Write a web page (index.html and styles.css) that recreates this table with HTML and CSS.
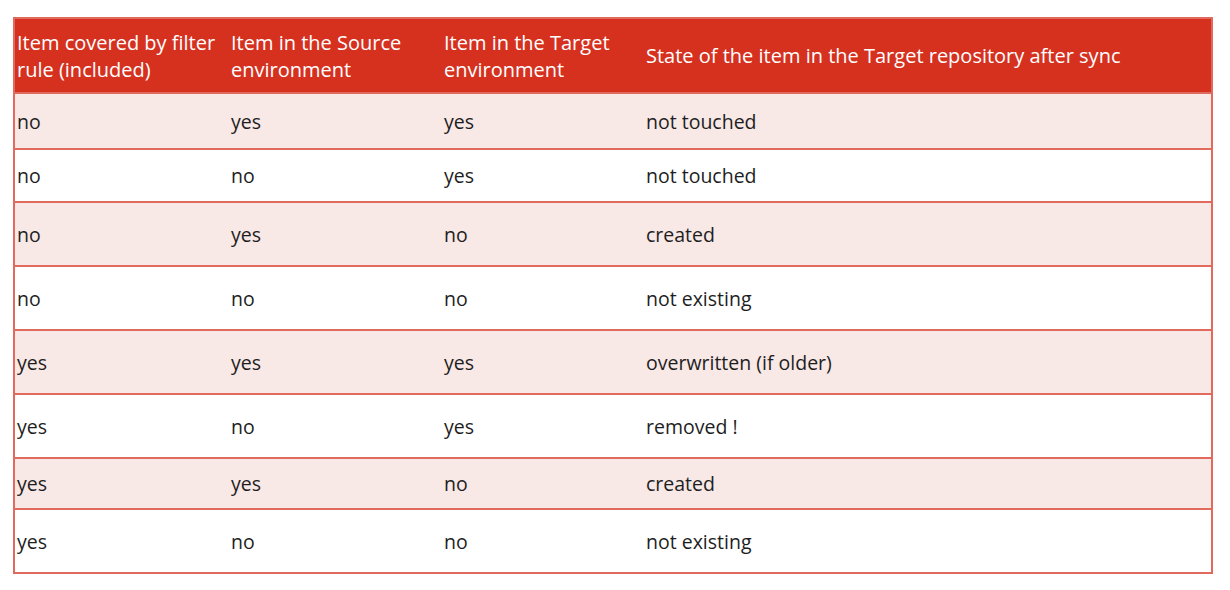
FILE: index.html
```html
<!DOCTYPE html>
<html>
<head>
<meta charset="utf-8">
<link rel="stylesheet" href="styles.css">
</head>
<body>
<table class="sync">
  <colgroup>
    <col class="c1"><col class="c2"><col class="c3"><col class="c4">
  </colgroup>
  <thead>
    <tr>
      <th>Item covered by filter rule (included)</th>
      <th>Item in the Source environment</th>
      <th>Item in the Target environment</th>
      <th>State of the item in the Target repository after sync</th>
    </tr>
  </thead>
  <tbody>
    <tr class="odd h56"><td>no</td><td>yes</td><td>yes</td><td>not touched</td></tr>
    <tr class="h53"><td>no</td><td>no</td><td>yes</td><td>not touched</td></tr>
    <tr class="odd h64"><td>no</td><td>yes</td><td>no</td><td>created</td></tr>
    <tr class="h64"><td>no</td><td>no</td><td>no</td><td>not existing</td></tr>
    <tr class="odd h64"><td>yes</td><td>yes</td><td>yes</td><td>overwritten (if older)</td></tr>
    <tr class="h64"><td>yes</td><td>no</td><td>yes</td><td>removed !</td></tr>
    <tr class="odd h51"><td>yes</td><td>yes</td><td>no</td><td>created</td></tr>
    <tr class="h64"><td>yes</td><td>no</td><td>no</td><td>not existing</td></tr>
  </tbody>
</table>
</body>
</html>
```
FILE: styles.css
```css
html, body {
  margin: 0;
  padding: 0;
  background: #ffffff;
}
body {
  font-family: "Open Sans", "Noto Sans", sans-serif;
}
.sync {
  margin: 17px 0 0 13px;
  width: 1198px;
  border-collapse: collapse;
  table-layout: fixed;
  border: 2px solid #e06a5e;
}
.c1 { width: 215px; }
.c2 { width: 213px; }
.c3 { width: 202px; }
.c4 { width: 568px; }
.sync th {
  background: #d6311f;
  color: #ffffff;
  font-weight: normal;
  text-align: left;
  font-size: 20px;
  line-height: 27px;
  height: 75px;
  padding: 0 1px 0 2px;
  box-sizing: border-box;
  vertical-align: middle;
}
.sync td {
  font-size: 19.5px;
  color: #1e1e1e;
  padding: 0 2px;
  vertical-align: middle;
  border-top: 2px solid #e06a5e;
}
.sync tr.odd td {
  background: #f8e8e6;
}
.h56 { height: 56px; }
.h53 { height: 53px; }
.h64 { height: 64px; }
.h51 { height: 51px; }
```
